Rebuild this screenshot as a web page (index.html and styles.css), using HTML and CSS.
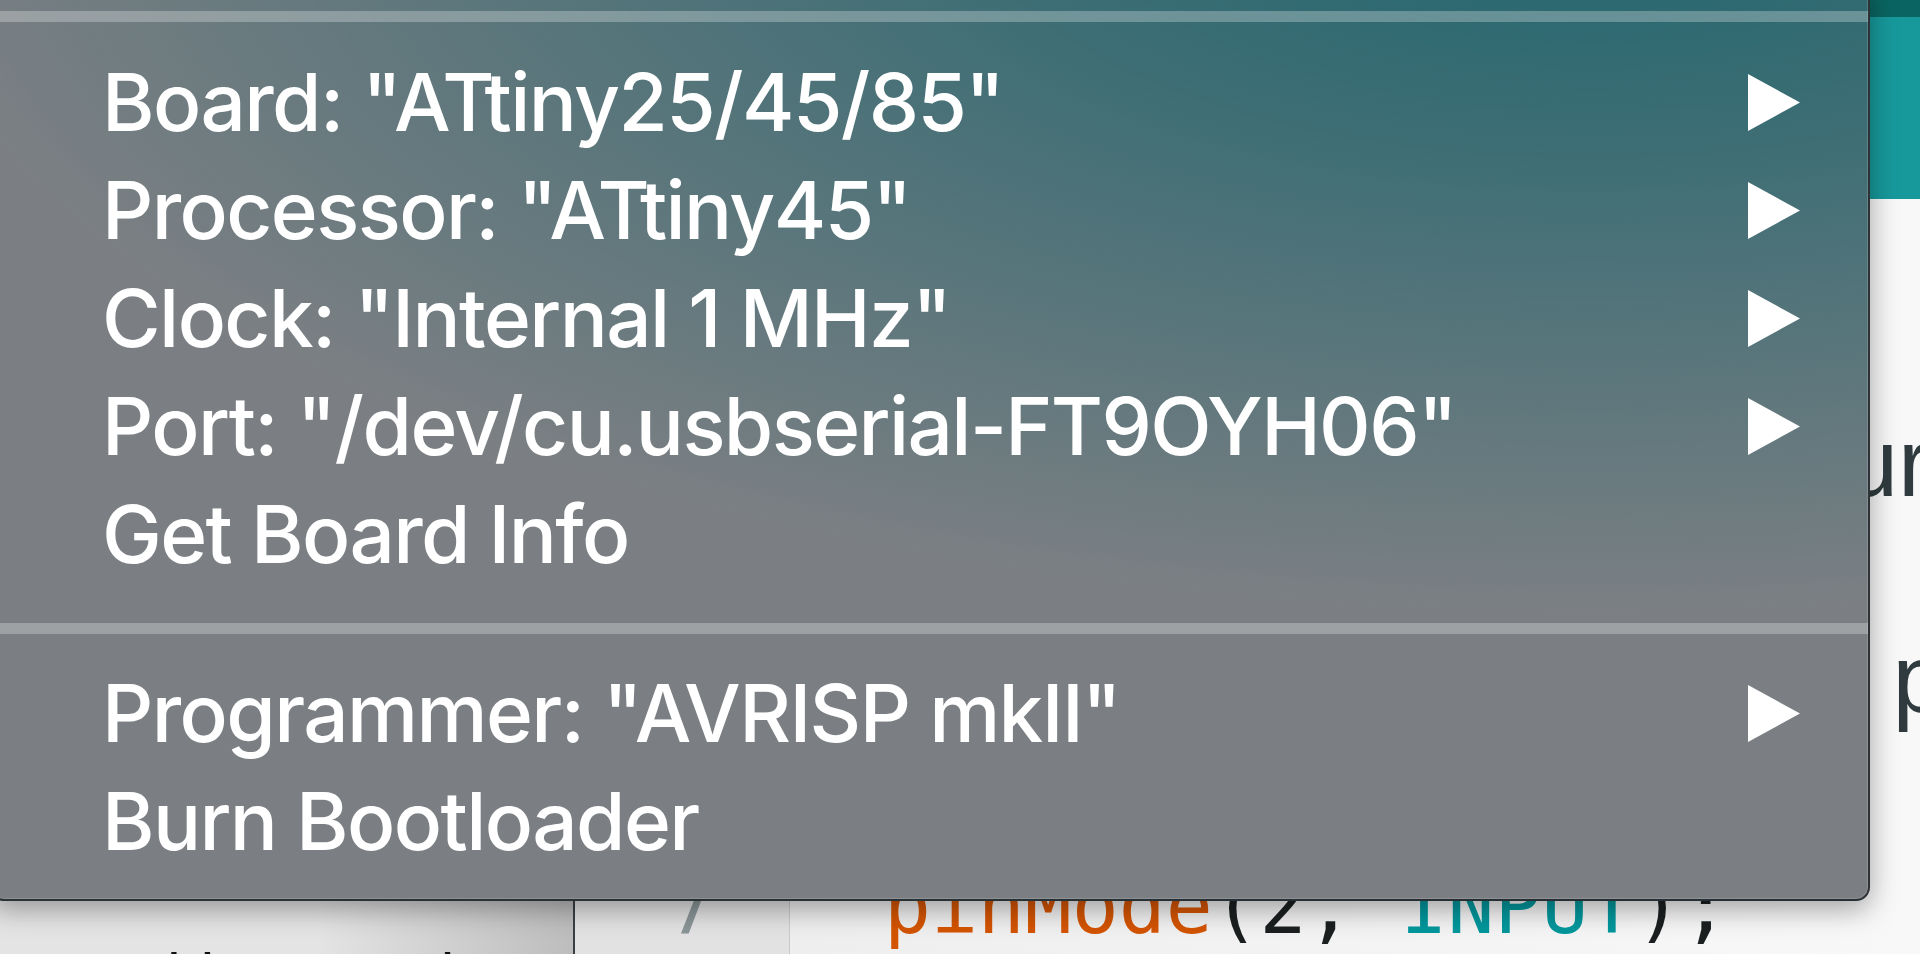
FILE: index.html
```html
<!DOCTYPE html>
<html lang="en">
<head>
    <meta charset="UTF-8">
    <meta name="viewport" content="width=device-width, initial-scale=1.0">
    <title>Tools menu</title>
    <link rel="stylesheet" href="styles.css">
</head>
<body>

<div class="app">
    <!-- toolbar behind the menu -->
    <div class="toolbar">
        <div class="toolbar_top"></div>
    </div>

    <div class="workspace">
        <div class="sidebar">
            <p class="sidebar_text">old so use the</p>
        </div>
        <div class="gutter">
            <div class="gutter_num">1</div>
            <div class="gutter_num">2</div>
            <div class="gutter_num">3</div>
            <div class="gutter_num">4</div>
            <div class="gutter_num">5</div>
            <div class="gutter_num">6</div>
            <div class="gutter_num">7</div>
        </div>
        <div class="code">
            <div class="code_line"></div>
            <div class="code_line"></div>
            <div class="code_line code_line_text"><span class="code_tail">our</span></div>
            <div class="code_line"></div>
            <div class="code_line code_line_text"><span class="code_tail code_tail_p">p</span></div>
            <div class="code_line"></div>
            <div class="code_line">  <span class="kw">pinMode</span>(2, <span class="const">INPUT</span>);</div>
        </div>
    </div>
</div>

<!-- Tools 菜单 -->
<div class="menu">
    <div class="menu_sep menu_sep_first"></div>

    <div class="menu_item">
        <span class="menu_label">Board: "ATtiny25/45/85"</span>
        <svg class="menu_arrow" width="52" height="57" viewBox="0 0 52 57"><polygon points="0,0 52,28.5 0,57" fill="#fff"/></svg>
    </div>
    <div class="menu_item">
        <span class="menu_label">Processor: "ATtiny45"</span>
        <svg class="menu_arrow" width="52" height="57" viewBox="0 0 52 57"><polygon points="0,0 52,28.5 0,57" fill="#fff"/></svg>
    </div>
    <div class="menu_item">
        <span class="menu_label">Clock: "Internal 1 MHz"</span>
        <svg class="menu_arrow" width="52" height="57" viewBox="0 0 52 57"><polygon points="0,0 52,28.5 0,57" fill="#fff"/></svg>
    </div>
    <div class="menu_item">
        <span class="menu_label">Port: "/dev/cu.usbserial-FT9OYH06"</span>
        <svg class="menu_arrow" width="52" height="57" viewBox="0 0 52 57"><polygon points="0,0 52,28.5 0,57" fill="#fff"/></svg>
    </div>
    <div class="menu_item">
        <span class="menu_label">Get Board Info</span>
    </div>

    <div class="menu_sep menu_sep_mid"></div>

    <div class="menu_item">
        <span class="menu_label">Programmer: "AVRISP mkII"</span>
        <svg class="menu_arrow" width="52" height="57" viewBox="0 0 52 57"><polygon points="0,0 52,28.5 0,57" fill="#fff"/></svg>
    </div>
    <div class="menu_item">
        <span class="menu_label">Burn Bootloader</span>
    </div>
</div>

</body>
</html>
```

FILE: styles.css
```css
*{
    padding: 0;
    margin: 0;
    box-sizing: border-box;
}
body{
    width: 1920px;
    height: 954px;
    overflow: hidden;
    position: relative;
    background: #f2f2f2;
    font-family: "Liberation Sans", Arial, sans-serif;
}

/* 背景窗口 */
.app{
    display: flex;
    flex-direction: column;
    height: 954px;
}
.toolbar{
    height: 199px;
    background: #17999b;
    flex: none;
}
.toolbar_top{
    height: 17px;
    background: #0a6562;
}
.workspace{
    flex: 1;
    display: flex;
    overflow: hidden;
}
.sidebar{
    width: 575px;
    flex: none;
    background: linear-gradient(to right, #e4e4e4 55%, #bdbdbd);
    border-right: 2px solid #3a3f42;
    padding: 740px 0 0 134px;
}
.sidebar_text{
    font-size: 60px;
    line-height: 72px;
    color: #111;
    white-space: nowrap;
}
.gutter{
    width: 215px;
    flex: none;
    background: #e2e2e2;
    border-right: 1px solid #c9c9c9;
    padding: 6px 75px 0 0;
    text-align: right;
    font-family: "DejaVu Sans Mono", monospace;
    font-size: 75px;
    line-height: 108px;
    color: #8a9597;
}
.gutter_num{
    height: 108px;
}
.code{
    flex: 1;
    background: linear-gradient(to right, #eeeeee, #f8f8f8);
    padding-top: 5px;
    font-family: "DejaVu Sans Mono", monospace;
    font-size: 78px;
    line-height: 108px;
    color: #1b1f20;
}
.code_line{
    height: 108px;
    white-space: pre;
}
.code_line_text{
    display: flex;
    justify-content: flex-end;
    font-family: "Liberation Sans", Arial, sans-serif;
    font-size: 96px;
    line-height: 86px;
    color: #2f3b3e;
}
.code_tail{
    margin-right: -10px;
}
.code_tail_p{
    margin-right: -26px;
}
.kw{
    color: #d35400;
}
.const{
    color: #00979c;
}

/* 菜单 */
.menu{
    position: absolute;
    left: -10px;
    top: -20px;
    width: 1880px;
    padding: 29px 0 24px 0;
    border: 2px solid rgba(38, 42, 45, 0.9);
    border-radius: 14px;
    background:
        radial-gradient(ellipse 1700px 720px at 1600px -90px, rgba(28, 100, 108, 0.95) 0%, rgba(40, 104, 112, 0.72) 38%, rgba(123, 127, 131, 0) 100%),
        #7b7f83;
    box-shadow: inset 0 0 0 1px rgba(255, 255, 255, 0.14), 0 8px 28px rgba(0, 0, 0, 0.35);
    z-index: 10;
}
.menu_sep{
    height: 11px;
    background: rgba(255, 255, 255, 0.27);
}
.menu_sep_first{
    margin-bottom: 26px;
}
.menu_sep_mid{
    margin: 35px 0 25px 0;
}
.menu_item{
    display: flex;
    align-items: center;
    justify-content: space-between;
    height: 108px;
    padding: 0 68px 0 110px;
    color: #fff;
    font-family: Inter, "Liberation Sans", sans-serif;
    font-weight: 500;
    font-size: 80px;
    letter-spacing: -1.6px;
    line-height: 108px;
    white-space: nowrap;
}
.menu_arrow{
    display: block;
    flex: none;
}
```
